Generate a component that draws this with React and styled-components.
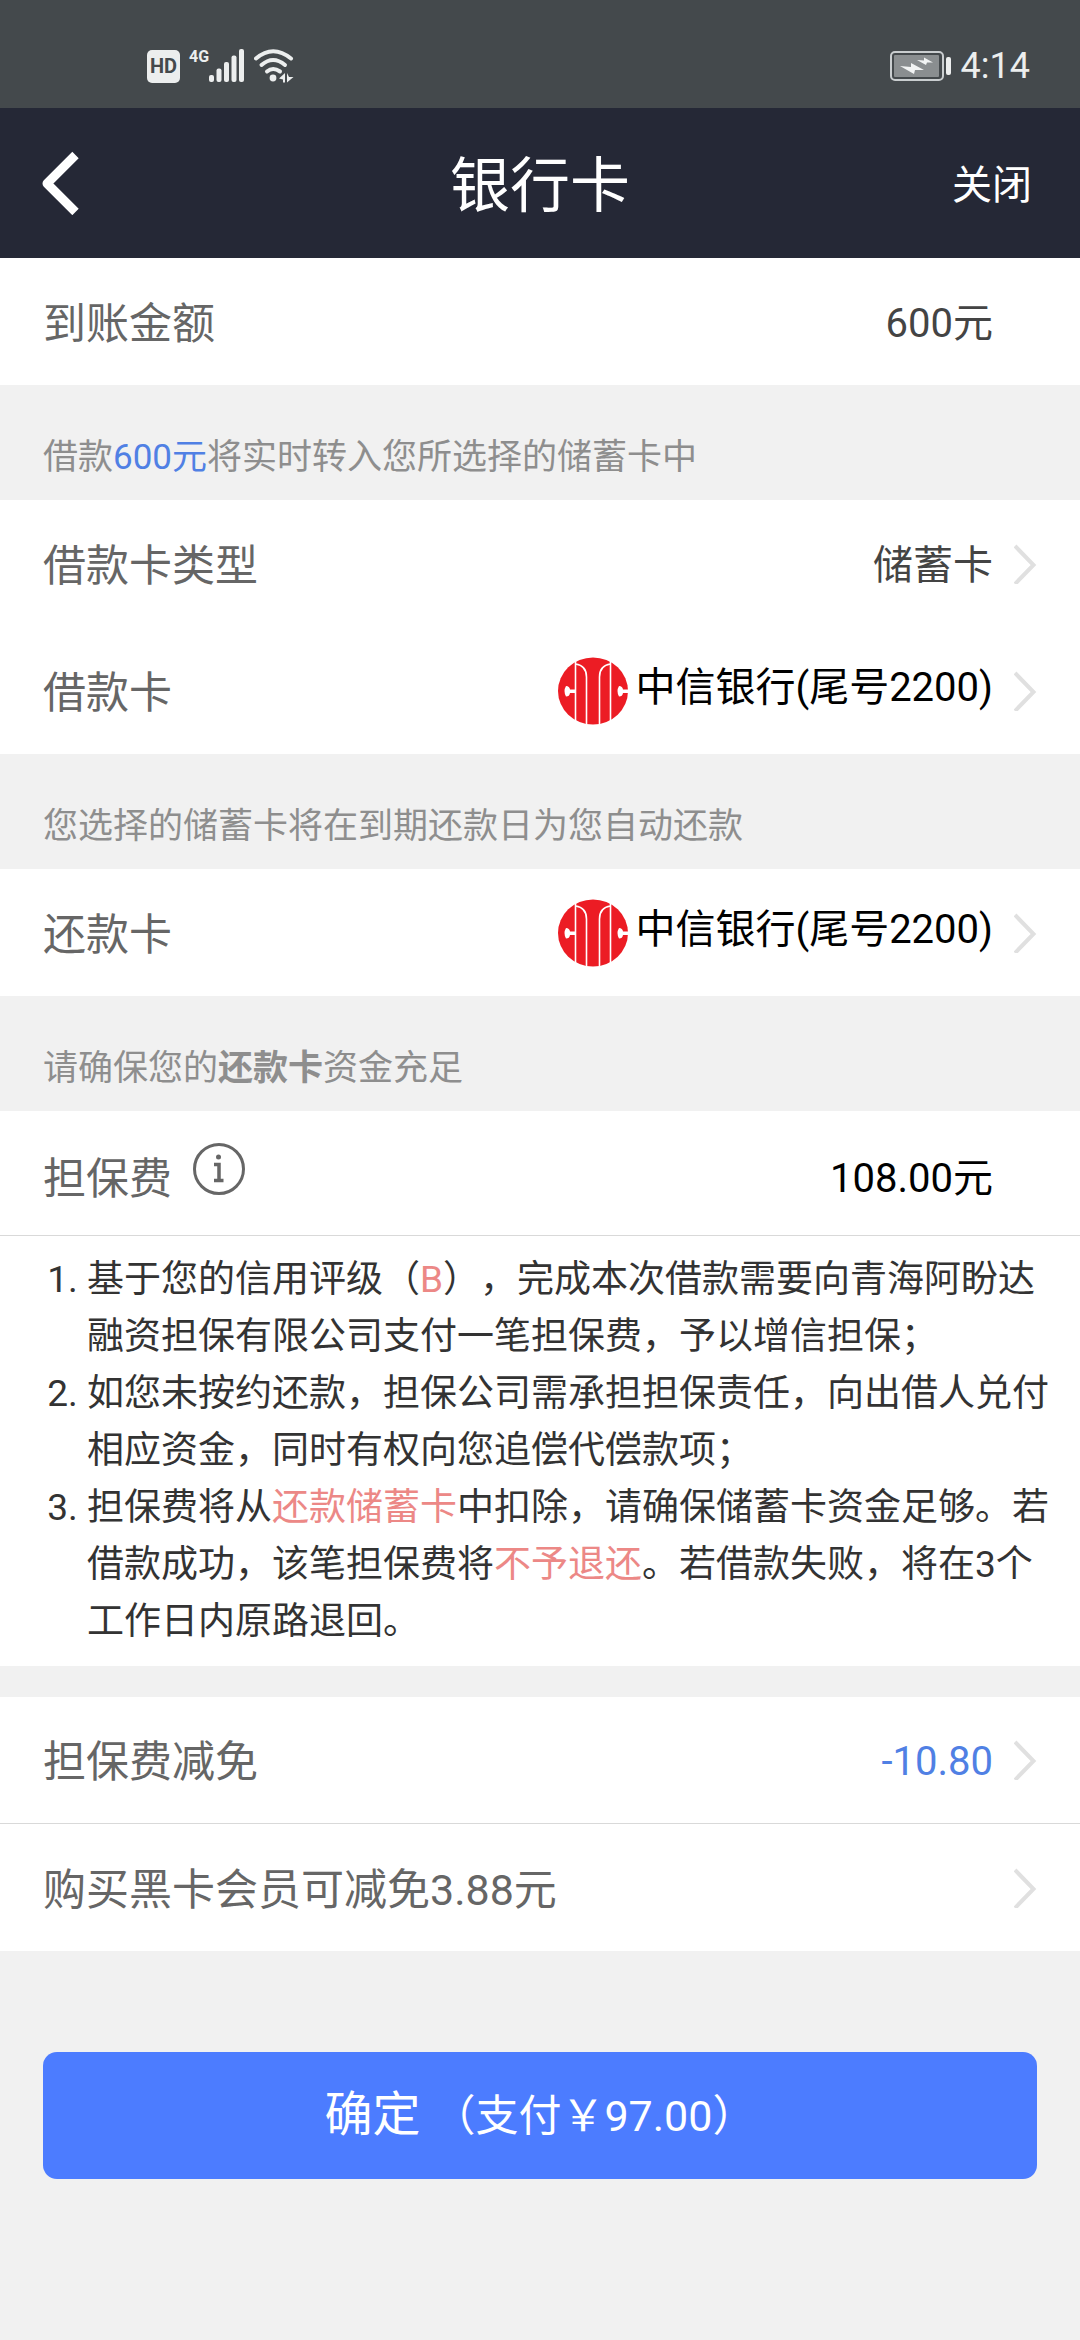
import React from 'react';
import styled, { createGlobalStyle } from 'styled-components';

const GlobalStyle = createGlobalStyle`
  *, *::before, *::after { box-sizing: border-box; }
  body {
    margin: 0;
    background: #f1f1f1;
    color: #333;
    font-family: Roboto, "Noto Sans CJK SC", sans-serif;
    text-spacing-trim: space-all;
  }
  button {
    margin: 0;
    padding: 0;
    border: 0;
    background: none;
    color: inherit;
    font: inherit;
    text-align: left;
    cursor: pointer;
  }
`;

const Page = styled.div`
  min-height: 100vh;
  background: #f1f1f1;
`;

const StatusBar = styled.div`
  display: flex;
  align-items: center;
  justify-content: space-between;
  height: 108px;
  padding: 24px 50px 0 147px;
  background: #44494c;
  color: #eceeee;
`;

const StatusGroup = styled.div`
  display: flex;
  align-items: center;
  gap: 9px;
`;

const HdBadge = styled.span`
  display: flex;
  align-items: center;
  justify-content: center;
  width: 33px;
  height: 33px;
  border-radius: 5px;
  background: #eceeee;
  color: #44494c;
  font-size: 20px;
  font-weight: 700;
  line-height: 24px;
`;

const Signal = styled.div`
  display: flex;
  align-items: flex-start;
  height: 34px;
`;

const Network = styled.span`
  font-size: 16px;
  font-weight: 700;
  line-height: 16px;
`;

const Clock = styled.time`
  font-size: 36px;
  line-height: 40px;
`;

const Header = styled.header`
  display: grid;
  grid-template-columns: 1fr auto 1fr;
  align-items: center;
  height: 150px;
  padding: 0 40px;
  background: #252836;
  color: #fff;
`;

const Title = styled.h1`
  margin: 0;
  padding-top: 8px;
  font-size: 60px;
  font-weight: 400;
  line-height: 72px;
`;

const BackButton = styled.button`
  display: flex;
  justify-self: start;
`;

const CloseButton = styled.button`
  justify-self: end;
  padding: 6px 8px 0 0;
  font-size: 40px;
  line-height: 48px;
`;

const Group = styled.section`
  background: #fff;
`;

const Row = styled.div`
  display: flex;
  align-items: center;
  width: 100%;
  height: ${(p) => (p.$tall ? 125 : 127)}px;
  padding: ${(p) => (p.$tall ? 8 : 0)}px 43px 0;
  border-bottom: ${(p) => (p.$line ? '1px solid #d9d9d9' : '0')};
`;

const Label = styled.span`
  flex: 1;
  display: flex;
  align-items: center;
  gap: 21px;
  padding-top: 4px;
  color: #666;
  font-size: 43px;
  line-height: 52px;
`;

const tones = { dark: '#444', black: '#000', blue: '#5080e4' };

const Value = styled.span`
  padding-top: 4px;
  color: ${(p) => tones[p.$tone || 'dark']};
  font-size: 40px;
  line-height: 48px;
`;

const BankValue = styled.span`
  display: flex;
  align-items: center;
  gap: 6px;
`;

const BankName = styled(Value)`
  padding: 0 0 6px;
`;

const ArrowSlot = styled.span`
  display: flex;
  justify-content: flex-end;
  flex: none;
  width: 44px;
`;

const InfoButton = styled.button`
  display: flex;
  padding-bottom: 20px;
`;

const Note = styled.p`
  margin: 0;
  padding: 52px 43px 21px;
  color: #8e8e8e;
  font-size: 35px;
  line-height: 42px;
`;

const Blue = styled.span`
  color: #5080e4;
`;

const Red = styled.span`
  color: #ec8886;
`;

const Terms = styled.ol`
  margin: 0;
  padding: 15px 16px 16px 87px;
  color: #333;
  font-size: 37px;
  line-height: 57px;
`;

const Spacer = styled.div`
  height: 31px;
`;

const Footer = styled.div`
  padding: 101px 43px 80px;
`;

const Submit = styled.button`
  display: block;
  width: 100%;
  height: 127px;
  border-radius: 14px;
  background: #4c7cff;
  color: #fff;
  font-size: 48px;
  line-height: 58px;
  text-align: center;
`;

const Pay = styled.span`
  font-size: 43px;
`;

const SignalIcon = () => (
  <svg width="36" height="34" viewBox="0 0 36 34" fill="currentColor" aria-hidden="true">
    <rect x="0" y="26" width="5" height="7" rx="2" />
    <rect x="7.5" y="19.5" width="5" height="13.5" rx="2" />
    <rect x="15" y="13" width="5" height="20" rx="2" />
    <rect x="22.5" y="6.5" width="5" height="26.5" rx="2" />
    <rect x="30" y="0" width="5" height="33" rx="2" />
  </svg>
);

const WifiIcon = () => (
  <svg width="40" height="34" viewBox="0 0 40 34" fill="none" stroke="currentColor" strokeWidth="4" strokeLinecap="round" aria-hidden="true">
    <path d="M2 9.500 Q19 -5 37 9.500" />
    <path d="M7.500 16 Q19 6 31 16" />
    <path d="M13 22.500 Q19 17.500 26 22.500" />
    <circle cx="19" cy="29" r="3.400" fill="currentColor" stroke="none" />
    <path d="M25 29.500 L31 24 V33.500 H29 V30.500 Z M33 24 V33.500 L39.500 28 H35 Z" fill="currentColor" stroke="none" />
  </svg>
);

const BatteryIcon = () => (
  <svg width="62" height="30" viewBox="0 0 62 30" aria-hidden="true">
    <rect x="1" y="1" width="52" height="28" rx="4" fill="none" stroke="#c9cdcf" strokeWidth="2" />
    <rect x="4" y="4" width="45" height="22" rx="1" fill="#8a8e90" />
    <path d="M10 15 L21 16 L21 12 L34 19 L25 19 L24 23 Z M27 9 L34 9.500 L34 6.500 L43 11.500 L37 11.500 L36 14 Z" fill="#f2f4f4" />
    <rect x="56" y="6" width="5" height="18" rx="2" fill="#eceeee" />
  </svg>
);

const BackIcon = () => (
  <svg width="40" height="64" viewBox="0 0 40 64" fill="none" stroke="currentColor" strokeWidth="9" strokeLinejoin="round" aria-hidden="true">
    <path d="M35.500 4 L7 32.500 L35.500 61" />
  </svg>
);

const Arrow = () => (
  <ArrowSlot>
    <svg width="23" height="40" viewBox="0 0 23 40" fill="none" stroke="#e0e0e0" strokeWidth="4" aria-hidden="true">
      <path d="M1 2 L19.500 21 L1 40" />
    </svg>
  </ArrowSlot>
);

const InfoIcon = () => (
  <svg width="52" height="52" viewBox="0 0 52 52" fill="none" stroke="#666" aria-hidden="true">
    <circle cx="26" cy="26" r="24.500" strokeWidth="3" />
    <circle cx="25.500" cy="14" r="2.500" fill="#666" stroke="none" />
    <path d="M21 21.500 H26 V37.500 M21 37.500 H30.500" strokeWidth="3.500" />
  </svg>
);

const CiticLogo = () => (
  <svg width="72" height="68" viewBox="0 0 72 68" aria-hidden="true">
    <ellipse cx="36" cy="34" rx="35" ry="33.500" fill="#ec1c24" />
    <g fill="none" stroke="#fff" strokeWidth="1.600">
      <path d="M18.500 4 V64" />
      <path d="M53.500 4 V64" />
      <path d="M18.500 7 C26 8 29.500 13 29.500 20 V68" />
      <path d="M53.500 7 C46 8 42.500 13 42.500 20 V68" />
    </g>
    <path d="M18.500 32.500 H13 Q12.500 29 9 29 Q6 34 9 39.500 Q12.500 39.500 13 36 H18.500 Z" fill="#fff" />
    <path d="M72 32.500 H66 Q65.500 29 62 29 Q59 34 62 39.500 Q65.500 39.500 66 36 H72 Z" fill="#fff" />
  </svg>
);

const BankCard = () => (
  <BankValue>
    <CiticLogo />
    <BankName $tone="black">中信银行(尾号2200)</BankName>
  </BankValue>
);

function LinkRow({ label, line, children }) {
  return (
    <Row as="button" type="button" $line={line}>
      <Label>{label}</Label>
      {children}
      <Arrow />
    </Row>
  );
}

export default function App() {
  return (
    <Page>
      <GlobalStyle />
      <StatusBar>
        <StatusGroup>
          <HdBadge>HD</HdBadge>
          <Signal>
            <Network>4G</Network>
            <SignalIcon />
          </Signal>
          <WifiIcon />
        </StatusGroup>
        <StatusGroup>
          <BatteryIcon />
          <Clock>4:14</Clock>
        </StatusGroup>
      </StatusBar>

      <Header>
        <BackButton type="button" aria-label="返回">
          <BackIcon />
        </BackButton>
        <Title>银行卡</Title>
        <CloseButton type="button">关闭</CloseButton>
      </Header>

      <main>
        <Group>
          <Row>
            <Label>到账金额</Label>
            <Value>600元</Value>
            <ArrowSlot />
          </Row>
        </Group>
        <Note>
          借款<Blue>600元</Blue>将实时转入您所选择的储蓄卡中
        </Note>

        <Group>
          <LinkRow label="借款卡类型">
            <Value>储蓄卡</Value>
          </LinkRow>
          <LinkRow label="借款卡">
            <BankCard />
          </LinkRow>
        </Group>
        <Note>您选择的储蓄卡将在到期还款日为您自动还款</Note>

        <Group>
          <LinkRow label="还款卡">
            <BankCard />
          </LinkRow>
        </Group>
        <Note>
          请确保您的<b>还款卡</b>资金充足
        </Note>

        <Group>
          <Row $tall $line>
            <Label>
              担保费
              <InfoButton type="button" aria-label="担保费说明">
                <InfoIcon />
              </InfoButton>
            </Label>
            <Value $tone="black">108.00元</Value>
            <ArrowSlot />
          </Row>
          <Terms>
            <li>
              基于您的信用评级（<Red>B</Red>），完成本次借款需要向青海阿盼达融资担保有限公司支付一笔担保费，予以增信担保；
            </li>
            <li>如您未按约还款，担保公司需承担担保责任，向出借人兑付相应资金，同时有权向您追偿代偿款项；</li>
            <li>
              担保费将从<Red>还款储蓄卡</Red>中扣除，请确保储蓄卡资金足够。若借款成功，该笔担保费将<Red>不予退还</Red>。若借款失败，将在3个工作日内原路退回。
            </li>
          </Terms>
        </Group>

        <Spacer />

        <Group>
          <LinkRow label="担保费减免" line>
            <Value $tone="blue">-10.80</Value>
          </LinkRow>
          <LinkRow label="购买黑卡会员可减免3.88元" />
        </Group>

        <Footer>
          <Submit type="button">
            确定 <Pay>（支付￥97.00）</Pay>
          </Submit>
        </Footer>
      </main>
    </Page>
  );
}
